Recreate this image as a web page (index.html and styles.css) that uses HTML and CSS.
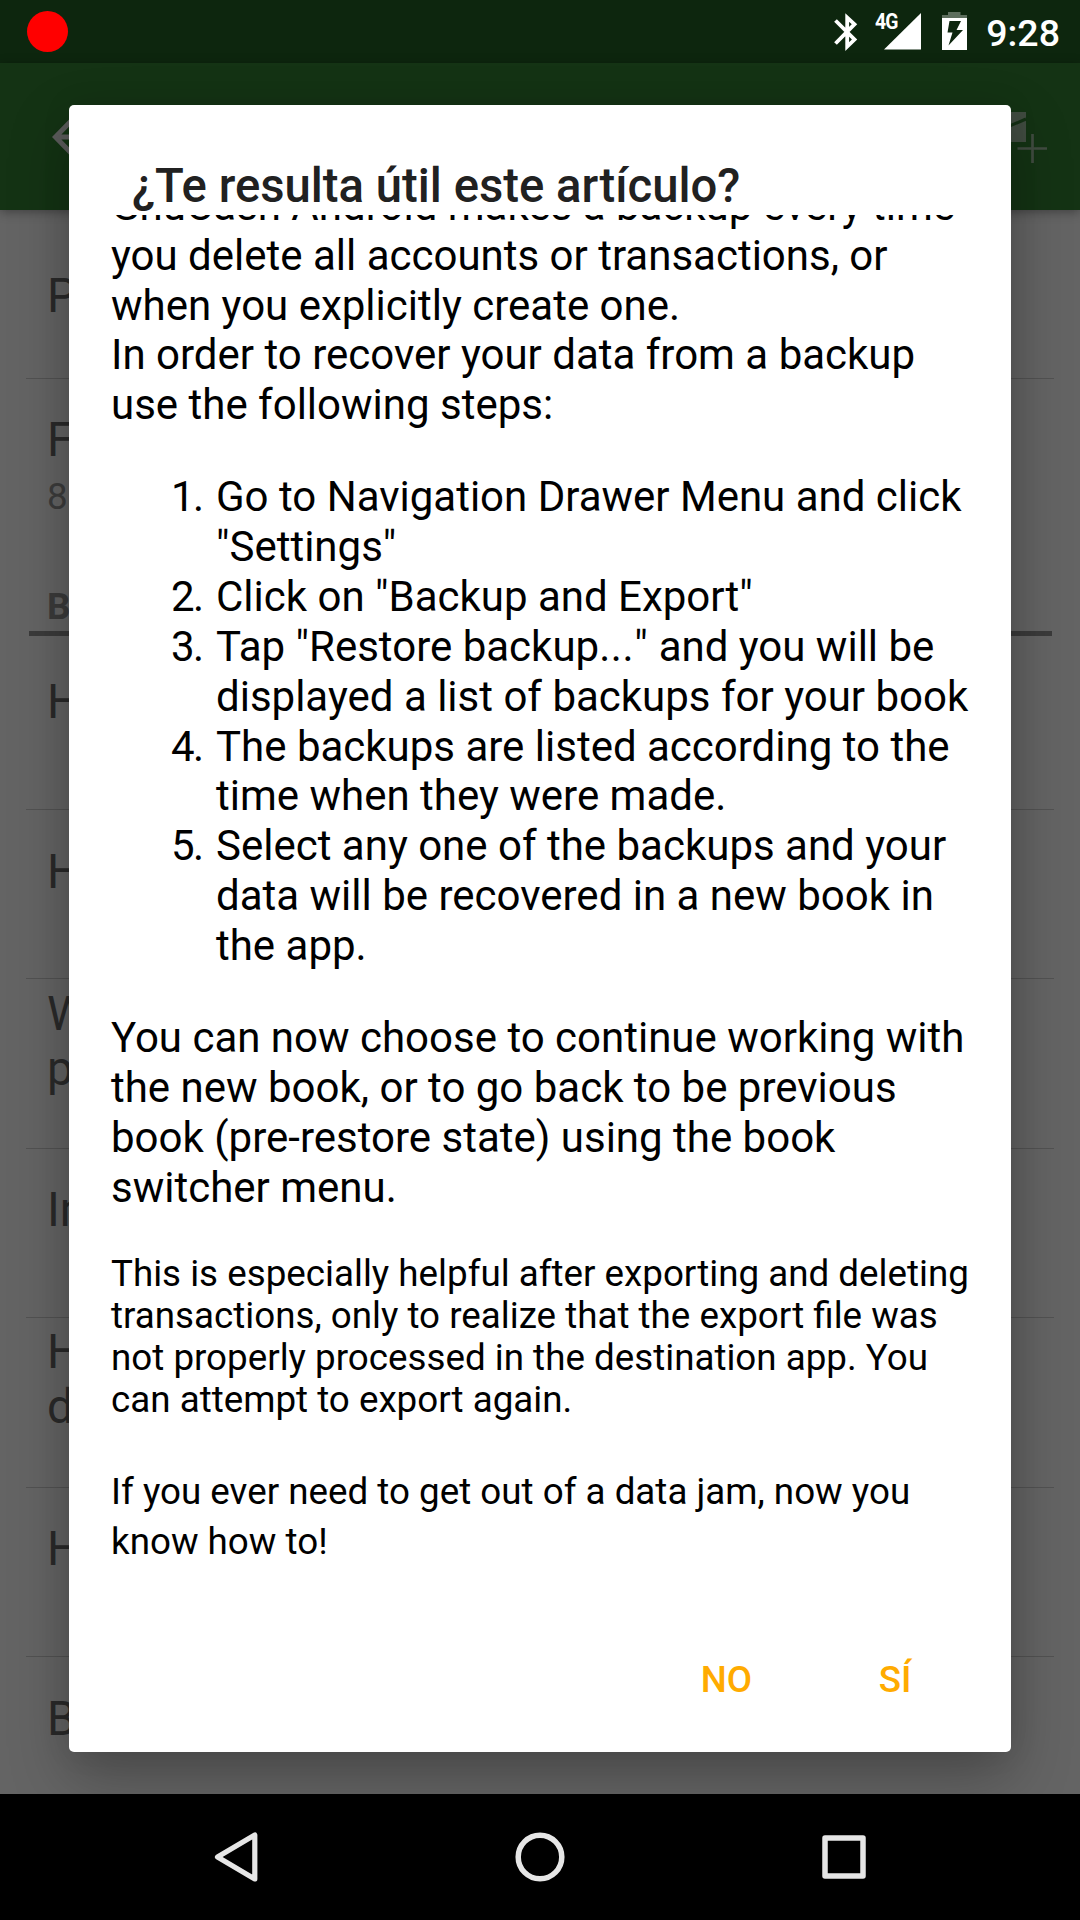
FILE: index.html
```html
<!DOCTYPE html>
<html lang="es">
<head>
<meta charset="utf-8">
<title>Ayuda</title>
<link rel="stylesheet" href="styles.css">
</head>
<body>
<div class="screen">
  <header class="status">
    <span class="record"></span>
    <div class="status-icons">
      <svg class="bluetooth" width="24" height="38" viewBox="0 0 24 38" fill="none" stroke="#fff" stroke-width="3.8"><path d="M1.500 7.500 20.500 26.500 13.200 33.500V4.500L20.500 11.200 1.500 30.500"/></svg>
      <span class="network">4G</span>
      <svg class="signal" width="37" height="37" viewBox="0 0 37 37"><path d="M0 36.500 37 0V36.500Z" fill="#fff"/></svg>
      <svg class="battery" width="25" height="38" viewBox="0 0 25 38"><path d="M6 0H18.500V3H25V6H0V3H6Z" fill="#5d6e5d"/><path fill="#fff" fill-rule="evenodd" d="M0 6H25V38H0ZM7.500 9 5.500 20.500H10.500L6.500 33.500 21 18H14.500L19 9Z"/></svg>
      <span class="clock">9:28</span>
    </div>
  </header>
  <nav class="toolbar">
    <svg width="44" height="44" viewBox="0 0 44 44" fill="none" stroke="#5c5c5c" stroke-width="5"><path d="M22 3 3.500 22 22 41M4 22H42"/></svg>
    <svg class="mail" width="68" height="54" viewBox="0 0 68 54"><path d="M0 1H47V31H0Z" fill="#414c41"/><path d="M0 1 23.500 18 47 8" fill="none" stroke="#143014" stroke-width="3"/><path d="M38.500 37.500H68M53.500 23V52" stroke="#414c41" stroke-width="2.700"/></svg>
  </nav>
  <main class="list">
    <section class="row row-first">P</section>
    <section class="row row-form">F<small>8</small></section>
    <h2>B</h2>
    <section class="row row-a">H</section>
    <section class="row">H</section>
    <section class="row">W<br>p</section>
    <section class="row">In</section>
    <section class="row">H<br>d</section>
    <section class="row">H</section>
    <section class="row row-last">B</section>
  </main>
  <footer class="navbar">
    <svg width="50" height="54" viewBox="0 0 50 54" fill="none" stroke="#e6e6e6" stroke-width="5.200" stroke-linejoin="round"><path d="M43.800 5V49L6.500 27Z"/></svg>
    <svg width="50" height="54" viewBox="0 0 50 54" fill="none" stroke="#e6e6e6" stroke-width="5.500"><circle cx="25" cy="27" r="21.800"/></svg>
    <svg width="50" height="54" viewBox="0 0 50 54" fill="none" stroke="#e6e6e6" stroke-width="5.500" stroke-linejoin="round"><path d="M6 8H44V46H6Z"/></svg>
  </footer>
  <div class="dialog" role="dialog">
    <h1>¿Te resulta útil este artículo?</h1>
    <article>
      <p class="intro">GnuCash Android makes a backup every time<br>you delete all accounts or transactions, or<br>when you explicitly create one.<br>In order to recover your data from a backup<br>use the following steps:</p>
      <ol>
        <li>Go to Navigation Drawer Menu and click<br>"Settings"</li>
        <li>Click on "Backup and Export"</li>
        <li>Tap "Restore backup<span class="dots">..."</span> and you will be<br>displayed a list of backups for your book</li>
        <li>The backups are listed according to the<br>time when they were made.</li>
        <li>Select any one of the backups and your<br>data will be recovered in a new book in<br>the app.</li>
      </ol>
      <p>You can now choose to continue working with<br>the new book, or to go back to be previous<br>book (pre-restore state) using the book<br>switcher menu.</p>
      <p class="note">This is especially helpful after exporting and deleting<br>transactions, only to realize that the export file was<br>not properly processed in the destination app. You<br>can attempt to export again.</p>
      <p class="closing">If you ever need to get out of a data jam, now you<br>know how to!</p>
    </article>
    <div class="actions"><button>NO</button><button>SÍ</button></div>
  </div>
</div>
</body>
</html>
```
FILE: styles.css
```css
* { box-sizing: border-box; }
body { margin: 0; background: #000; font-family: Roboto, sans-serif; }
.screen { position: relative; width: 1080px; height: 1920px; overflow: hidden; display: flex; flex-direction: column; background: #646464; }

.status { flex: none; height: 63px; padding: 0 21px 0 27px; display: flex; align-items: center; justify-content: space-between; background: #0d260e; color: #fff; }
.record { width: 41px; height: 41px; border-radius: 50%; background: #f00; }
.status-icons { display: flex; height: 63px; align-items: flex-start; }
.status-icons svg { display: block; }
.bluetooth { margin-top: 13px; }
.network { width: 27px; margin: 12px -18px 0 17px; font-size: 22px; line-height: 20px; font-weight: 700; letter-spacing: -1px; transform: scaleX(.88); transform-origin: left; }
.signal { margin-top: 13px; }
.battery { margin: 12px 19px 0 21px; }
.clock { font-size: 37.5px; font-weight: 500; line-height: 66px; margin-right: -1px; }

.toolbar { position: relative; flex: none; height: 147px; padding: 0 33px 0 52px; display: flex; align-items: center; justify-content: space-between; background: #143314; box-shadow: 0 2px 10px rgba(0,0,0,.35); }
.mail { margin-top: 3px; }

.list { flex: none; height: 1584px; overflow: hidden; padding: 0 26px; color: #2a2a2a; }
.row { height: 169.4px; padding: 0 21px 44px; display: flex; flex-direction: column; justify-content: center; border-bottom: 1px solid #525252; font-size: 47.25px; line-height: 55px; }
.row-first { height: 169px; padding-top: 4px; padding-bottom: 0; }
.row-form { height: 180px; border: 0; justify-content: flex-start; padding-top: 34px; padding-bottom: 0; }
.row small { font-size: 36.75px; line-height: 43px; color: #3c3c3c; margin-top: 7px; }
.list h2 { height: 77px; margin: 0 2.500px; padding: 26px 18.500px 0; border-bottom: 5px solid #3b3b3b; color: #3b3b3b; font-size: 36.75px; line-height: 43px; font-weight: 700; }
.row-a { height: 174px; padding-bottom: 41px; }
.row-last { border: 0; }

.navbar { position: relative; flex: none; height: 126px; padding: 0 211px; display: flex; align-items: center; justify-content: space-between; background: #000; z-index: 2; }

/* Modal window over the help list */
.dialog { position: absolute; left: 69px; top: 105px; width: 942px; height: 1647px; padding: 52px 0 0; display: flex; flex-direction: column; background: #fff; border-radius: 5px; box-shadow: 0 24px 60px rgba(0,0,0,.28), 0 0 30px rgba(0,0,0,.08); }
.dialog h1 { flex: none; height: 58px; margin: 0 63px; color: #212121; font-size: 47.25px; line-height: 58px; font-weight: 500; }
.dialog article { flex: none; height: 1380px; padding-left: 42px; overflow: hidden; color: #000; font-size: 42px; line-height: 49.875px; white-space: nowrap; }
.dialog p { margin: 0; }
.dialog .intro { margin-top: -34.2px; }
.dialog ol { margin: 42px 0; padding-left: 105px; list-style: none; counter-reset: step; }
.dialog li { counter-increment: step; }
.dialog li::before { content: counter(step) "."; float: left; width: 45px; margin-left: -45px; letter-spacing: -1.5px; }
.dialog .dots { font-kerning: none; letter-spacing: .6px; }
.dialog .note { margin-top: 40.500px; font-size: 36.75px; line-height: 42px; }
.dialog .closing { margin-top: 46px; font-size: 36.75px; }
.actions { display: flex; justify-content: flex-end; gap: 106px; padding: 55px 96px 0; }
.actions button { width: 85px; height: 60px; padding: 0; border: 0; background: none; color: #ffab00; font: 500 36.75px/60px Roboto, sans-serif; }
.actions button + button { width: 40px; }
```
